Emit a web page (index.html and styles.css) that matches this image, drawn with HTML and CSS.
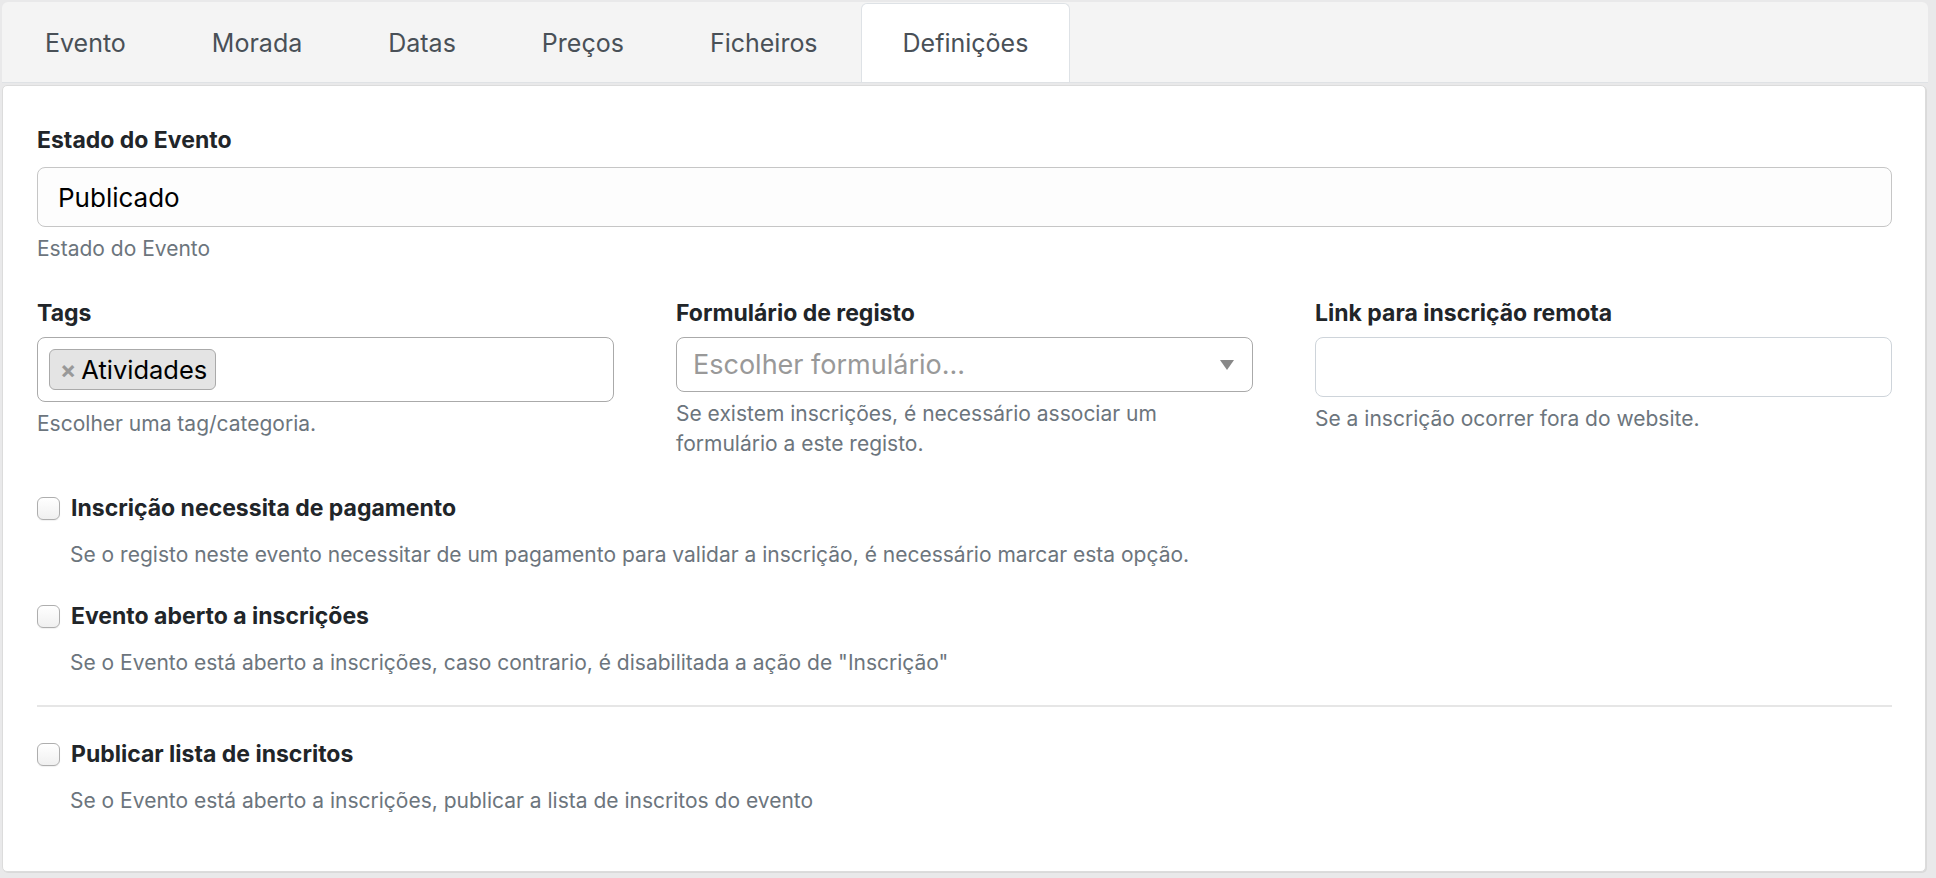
FILE: index.html
```html
<!DOCTYPE html>
<html lang="pt">
<head>
<meta charset="utf-8">
<title>Definições</title>
<link rel="stylesheet" href="styles.css">
</head>
<body>
<div class="page">
  <nav class="tabs">
    <a class="tab">Evento</a>
    <a class="tab">Morada</a>
    <a class="tab">Datas</a>
    <a class="tab">Preços</a>
    <a class="tab">Ficheiros</a>
    <a class="tab active">Definições</a>
  </nav>
  <section class="card">
    <div class="group">
      <label class="label">Estado do Evento</label>
      <div class="input">Publicado</div>
      <div class="help">Estado do Evento</div>
    </div>

    <div class="row3">
      <div class="col">
        <label class="label">Tags</label>
        <div class="input tags">
          <span class="chip"><span class="chip-x">×</span>Atividades</span>
        </div>
        <div class="help">Escolher uma tag/categoria.</div>
      </div>
      <div class="col">
        <label class="label">Formulário de registo</label>
        <div class="input select">
          <span class="placeholder">Escolher formulário...</span>
          <span class="arrow"></span>
        </div>
        <div class="help">Se existem inscrições, é necessário associar um<br>formulário a este registo.</div>
      </div>
      <div class="col">
        <label class="label">Link para inscrição remota</label>
        <div class="input link"></div>
        <div class="help">Se a inscrição ocorrer fora do website.</div>
      </div>
    </div>

    <div class="check">
      <label class="check-label"><input type="checkbox" class="box"><span>Inscrição necessita de pagamento</span></label>
      <div class="help indent">Se o registo neste evento necessitar de um pagamento para validar a inscrição, é necessário marcar esta opção.</div>
    </div>
    <div class="check">
      <label class="check-label"><input type="checkbox" class="box"><span>Evento aberto a inscrições</span></label>
      <div class="help indent">Se o Evento está aberto a inscrições, caso contrario, é disabilitada a ação de "Inscrição"</div>
    </div>
    <hr class="divider">
    <div class="check last">
      <label class="check-label"><input type="checkbox" class="box"><span>Publicar lista de inscritos</span></label>
      <div class="help indent">Se o Evento está aberto a inscrições, publicar a lista de inscritos do evento</div>
    </div>
  </section>
</div>
</body>
</html>
```
FILE: styles.css
```css
* { box-sizing: border-box; }
html, body { margin: 0; padding: 0; }
body {
  background: #e9e9ea;
  font-family: Inter, "Liberation Sans", sans-serif;
  color: #212529;
}
.page {
  padding: 2px 8px 0 2px;
  height: 878px;
}
.tabs {
  display: flex;
  height: 81px;
  background: #f4f4f4;
  border-radius: 6px 6px 0 0;
  border-bottom: 1px solid #dfe2e5;
}
.tab {
  display: flex;
  align-items: center;
  padding: 0 42px;
  font-size: 25px;
  color: #495057;
  border: 1px solid transparent;
  border-bottom: 0;
  border-radius: 6px 6px 0 0;
  margin-top: 1px;
}
.tab.active {
  background: #fff;
  border-color: #dee2e6;
  padding: 0 41px;
}
.card {
  margin-top: 2px;
  background: #fff;
  border: 1px solid #dcdcdc;
  border-radius: 5px;
  box-shadow: 1px 1px 0 #dadada;
  padding: 38px 33px 55px 34px;
  width: 1924px;
}
.label {
  display: block;
  font-size: 23px;
  font-weight: 700;
  line-height: 33px;
  margin-bottom: 10px;
  color: #212529;
}
.input {
  height: 60px;
  border: 1px solid #c6c6c6;
  border-radius: 8px;
  background: #fdfdfd;
  display: flex;
  align-items: center;
  padding: 0 20px;
  font-size: 26px;
  color: #000;
}
.help {
  font-size: 21px;
  line-height: 30px;
  margin-top: 7px;
  color: #6c757d;
}
.group { margin-bottom: 33px; }
.row3 {
  display: grid;
  grid-template-columns: 1fr 1fr 1fr;
  column-gap: 62px;
  margin-bottom: 33px;
}
.row3 .label { margin-bottom: 7px; }
.tags {
  height: 65px;
  padding: 11px 11px 0;
  align-items: flex-start;
  background: #fff;
  border-color: #aaa;
}
.chip {
  display: inline-flex;
  align-items: center;
  height: 41px;
  background: #e4e4e4;
  border: 1px solid #aaa;
  border-radius: 6px;
  padding: 0 8px 0 10px;
  font-size: 25.5px;
  color: #000;
}
.chip-x {
  color: #999;
  font-weight: 700;
  font-size: 24px;
  margin-right: 5px;
}
.select {
  height: 55px;
  justify-content: space-between;
  padding: 0 18px 0 16px;
  border-color: #aaa;
  background: #fff;
}
.placeholder {
  color: #999;
  font-size: 27px;
}
.arrow {
  width: 0;
  height: 0;
  border-left: 7px solid transparent;
  border-right: 7px solid transparent;
  border-top: 10px solid #888;
}
.link {
  background: #fff;
  border-color: #ced4da;
}
.check { margin-bottom: 30px; }
.check.last { margin-bottom: 0; }
.check-label {
  display: flex;
  align-items: center;
  font-size: 23px;
  font-weight: 700;
  line-height: 33px;
  color: #212529;
}
.box {
  appearance: none;
  -webkit-appearance: none;
  width: 23px;
  height: 23px;
  margin: 0 11px 0 0;
  border: 1px solid #aeaeae;
  border-radius: 6px;
  background: linear-gradient(#ffffff, #f0f0f0);
  box-shadow: 0 1px 1px rgba(0,0,0,0.06);
}
.indent {
  margin-top: 15px;
  padding-left: 33px;
}
.divider {
  border: 0;
  border-top: 2px solid #e6e6e6;
  margin: -3px 0 31px;
}
```
